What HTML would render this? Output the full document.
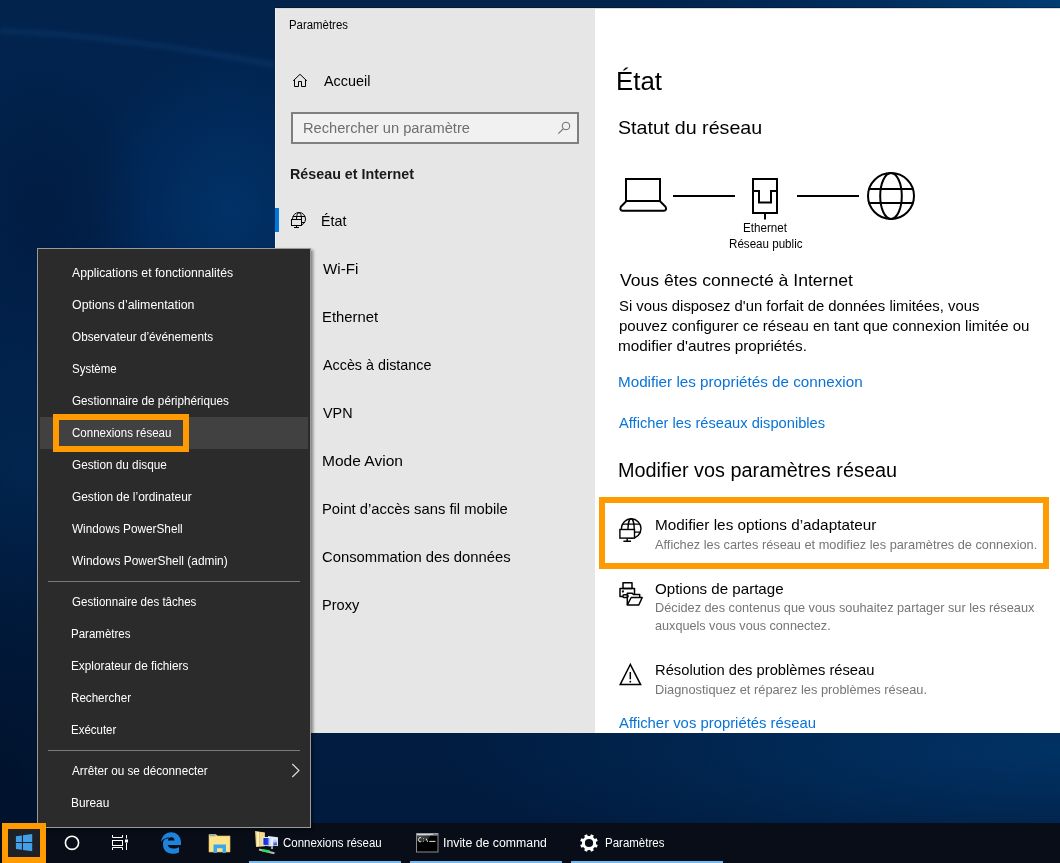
<!DOCTYPE html>
<html><head><meta charset="utf-8"><title>Paramètres</title>
<style>
html,body{margin:0;padding:0;}
body{width:1060px;height:863px;overflow:hidden;position:relative;font-family:"Liberation Sans",sans-serif;
background:#012250;}
.t{position:absolute;white-space:nowrap;}
.abs{position:absolute;}
svg{position:absolute;overflow:visible;}
</style></head><body>
<div class="abs" style="left:0;top:0;width:1060px;height:863px;
background:
 radial-gradient(ellipse 260px 330px at 0px 800px, rgba(0,12,32,0.6), rgba(0,12,32,0) 100%),
 radial-gradient(ellipse 110px 150px at 40px 210px, rgba(0,16,40,0.35), rgba(0,16,40,0) 100%),
 radial-gradient(ellipse 140px 170px at 230px 210px, rgba(1,52,108,0.85), rgba(1,52,108,0) 100%),
 radial-gradient(ellipse 620px 130px at 1060px 750px, rgba(1,56,110,0.8), rgba(1,56,110,0) 100%),
 radial-gradient(ellipse 90px 160px at 20px 470px, rgba(1,40,82,0.7), rgba(1,40,82,0) 100%),
 linear-gradient(180deg,#01234c 0%,#012350 25%,#011f46 55%,#011d42 80%,#011a3c 100%);"></div>
<svg style="left:0;top:0" width="1060" height="863"><defs><filter id="bl" x="-20%" y="-200%" width="140%" height="500%"><feGaussianBlur stdDeviation="2.2"/></filter></defs>
<path d="M0,31 C70,33 170,45 275,65" stroke="rgba(30,100,170,0.16)" stroke-width="6" fill="none" filter="url(#bl)"/></svg>
<div class="abs" style="left:275px;top:8px;width:320px;height:725px;background:#e6e6e6;"></div>
<div class="abs" style="left:595px;top:8px;width:465px;height:725px;background:#fff;"></div>
<div class="abs" style="left:275px;top:8px;width:785px;height:1px;background:#dcd9d6;"></div>
<div class="abs" style="left:275px;top:0;width:785px;height:8px;background:linear-gradient(90deg,rgba(1,35,76,0) 0%,rgba(1,35,76,0) 45%,#012c5c 75%,#013c72 100%);"></div>
<div class="abs" style="left:275px;top:7px;width:785px;height:1px;background:rgba(0,0,0,0.25);"></div>
<div class="abs" style="left:275px;top:8px;width:1px;height:725px;background:#f0f0f0;"></div>
<div class="t " style="left:288.55px;top:18.84px;font-size:12px;line-height:12px;color:#000;transform:scaleX(0.9508);transform-origin:0 0;">Paramètres</div>
<svg style="left:0;top:0" width="1" height="1"><path d="M293.2,80.8 L300,74.3 L306.8,80.8 M294.5,79.5 V86.5 H298.5 V81.5 H301.5 V86.5 H305.5 V79.5" stroke="#000" stroke-width="1" fill="none" stroke-linejoin="miter"/></svg>
<div class="t " style="left:324.30px;top:73.30px;font-size:15px;line-height:15px;color:#000;transform:scaleX(0.9583);transform-origin:0 0;">Accueil</div>
<div class="abs" style="left:291px;top:112px;width:284px;height:28px;border:2px solid #7f7f7f;background:#f1f1f1;"></div>
<div class="t " style="left:302.62px;top:120.10px;font-size:15px;line-height:15px;color:#6e6e6e;transform:scaleX(0.9765);transform-origin:0 0;">Rechercher un paramètre</div>
<svg style="left:0;top:0" width="1" height="1"><circle cx="566" cy="126" r="3.8" stroke="#6b6b6b" stroke-width="1" fill="none"/><path d="M563.2,128.8 L558.3,133.7" stroke="#6b6b6b" stroke-width="1.1"/></svg>
<div class="t " style="left:290.25px;top:166.30px;font-size:15px;line-height:15px;color:#1a1a1a;font-weight:700;transform:scaleX(0.9535);transform-origin:0 0;">Réseau et Internet</div>
<div class="abs" style="left:275px;top:208px;width:4px;height:24px;background:#0078d7;"></div>
<svg style="left:0;top:0" width="1" height="1"><g fill="none" stroke="#000" stroke-width="1">
<circle cx="299" cy="219" r="6.5"/>
<ellipse cx="299" cy="219" rx="2.5" ry="6.5"/>
<path d="M293,216.5 H305 M302,222.5 H305"/>
<rect x="291.5" y="219.5" width="10" height="6" fill="#e6e6e6"/>
<path d="M296.5,226 V227.5 M294,227.5 H299"/>
</g></svg>
<div class="t " style="left:321.45px;top:213.30px;font-size:15px;line-height:15px;color:#000;transform:scaleX(0.9500);transform-origin:0 0;">État</div>
<div class="t " style="left:322.90px;top:261.30px;font-size:15px;line-height:15px;color:#000;transform:scaleX(1.0088);transform-origin:0 0;">Wi-Fi</div>
<div class="t " style="left:321.81px;top:309.30px;font-size:15px;line-height:15px;color:#000;transform:scaleX(0.9875);transform-origin:0 0;">Ethernet</div>
<div class="t " style="left:322.90px;top:357.30px;font-size:15px;line-height:15px;color:#000;transform:scaleX(0.9558);transform-origin:0 0;">Accès à distance</div>
<div class="t " style="left:322.90px;top:405.30px;font-size:15px;line-height:15px;color:#000;transform:scaleX(0.9567);transform-origin:0 0;">VPN</div>
<div class="t " style="left:321.76px;top:453.30px;font-size:15px;line-height:15px;color:#000;transform:scaleX(1.0364);transform-origin:0 0;">Mode Avion</div>
<div class="t " style="left:321.81px;top:501.30px;font-size:15px;line-height:15px;color:#000;transform:scaleX(0.9861);transform-origin:0 0;">Point d’accès sans fil mobile</div>
<div class="t " style="left:322.30px;top:549.30px;font-size:15px;line-height:15px;color:#000;transform:scaleX(0.9880);transform-origin:0 0;">Consommation des données</div>
<div class="t " style="left:321.83px;top:597.30px;font-size:15px;line-height:15px;color:#000;transform:scaleX(0.9730);transform-origin:0 0;">Proxy</div>
<div class="t " style="left:616.21px;top:67.99px;font-size:26px;line-height:26px;color:#000;transform:scaleX(0.9932);transform-origin:0 0;">État</div>
<div class="t " style="left:617.57px;top:118.42px;font-size:19px;line-height:19px;color:#000;transform:scaleX(1.0343);transform-origin:0 0;">Statut du réseau</div>
<svg style="left:0;top:0" width="1" height="1"><g fill="none" stroke="#000" stroke-width="2">
<rect x="626" y="179" width="34" height="22"/>
<path d="M626,201.5 L620.8,206.8 Q619.5,210.7 622.5,210.7 H664 Q667,210.7 665.6,206.8 L660.3,201.5"/>
<path d="M673,196 H735"/>
<rect x="753" y="179" width="24" height="34"/>
<path d="M753,191 H759 V202.5 H771 V191 H777"/>
<path d="M765,214 V219.5"/>
<path d="M797,196 H859"/>
<circle cx="891" cy="196" r="23"/>
<ellipse cx="891" cy="196" rx="10.8" ry="23"/>
<path d="M868.5,189 H913.5 M868.5,203 H913.5"/>
</g></svg>
<div class="t " style="left:743.33px;top:222.34px;font-size:12px;line-height:12px;color:#000;transform:scaleX(0.9711);transform-origin:0 0;">Ethernet</div>
<div class="t " style="left:728.83px;top:237.84px;font-size:12px;line-height:12px;color:#000;transform:scaleX(0.9667);transform-origin:0 0;">Réseau public</div>
<div class="t " style="left:619.80px;top:272.41px;font-size:17px;line-height:17px;color:#000;transform:scaleX(1.0356);transform-origin:0 0;">Vous êtes connecté à Internet</div>
<div class="t " style="left:618.51px;top:298.30px;font-size:15px;line-height:15px;color:#000;transform:scaleX(0.9904);transform-origin:0 0;">Si vous disposez d'un forfait de données limitées, vous</div>
<div class="t " style="left:618.50px;top:318.30px;font-size:15px;line-height:15px;color:#000;transform:scaleX(1.0025);transform-origin:0 0;">pouvez configurer ce réseau en tant que connexion limitée ou</div>
<div class="t " style="left:618.48px;top:338.30px;font-size:15px;line-height:15px;color:#000;transform:scaleX(1.0191);transform-origin:0 0;">modifier d'autres propriétés.</div>
<div class="t " style="left:618.28px;top:374.30px;font-size:15px;line-height:15px;color:#0873d8;transform:scaleX(1.0151);transform-origin:0 0;">Modifier les propriétés de connexion</div>
<div class="t " style="left:619.30px;top:414.60px;font-size:15px;line-height:15px;color:#0873d8;transform:scaleX(0.9782);transform-origin:0 0;">Afficher les réseaux disponibles</div>
<div class="t " style="left:617.51px;top:460.47px;font-size:20px;line-height:20px;color:#000;transform:scaleX(0.9921);transform-origin:0 0;">Modifier vos paramètres réseau</div>
<div class="abs" style="left:599px;top:497px;width:438px;height:60px;border:6px solid #ff9a00;"></div>
<svg style="left:0;top:0" width="1" height="1"><g fill="none" stroke="#000" stroke-width="1.4">
<circle cx="631.2" cy="528.6" r="9.8"/>
<ellipse cx="631.1" cy="528.6" rx="3.1" ry="9.8"/>
<path d="M622.5,524.1 H640 M635,532.1 H640.3"/>
<rect x="619.9" y="529.5" width="14.6" height="8.6" fill="#fff"/>
<path d="M627.2,538.3 V541.3 M623.4,541.3 H631"/>
</g></svg>
<div class="t " style="left:654.68px;top:517.30px;font-size:15px;line-height:15px;color:#000;transform:scaleX(1.0208);transform-origin:0 0;">Modifier les options d’adaptateur</div>
<div class="t " style="left:655.00px;top:538.00px;font-size:13px;line-height:13px;color:#767676;transform:scaleX(0.9820);transform-origin:0 0;">Affichez les cartes réseau et modifiez les paramètres de connexion.</div>
<svg style="left:0;top:0" width="1" height="1"><g fill="none" stroke="#000" stroke-width="1.5" stroke-linejoin="round">
<rect x="623" y="582.8" width="9" height="5.8"/>
<path d="M623,596.5 H620 V588.6 H634.5 V594"/>
<circle cx="622.9" cy="591.5" r="0.4" fill="#000"/>
<rect x="623" y="594.8" width="5" height="2.7" rx="1" fill="#fff"/>
<path d="M627.3,605 V593.3 H632.3 L633.4,594.6 H639.7 V597.5"/>
<path d="M627.3,605 L631.2,597.5 H642.2 L638.8,605 Z" fill="#fff"/>
</g></svg>
<div class="t " style="left:655.40px;top:581.30px;font-size:15px;line-height:15px;color:#000;transform:scaleX(1.0079);transform-origin:0 0;">Options de partage</div>
<div class="t " style="left:655.02px;top:601.00px;font-size:13px;line-height:13px;color:#767676;transform:scaleX(0.9793);transform-origin:0 0;">Décidez des contenus que vous souhaitez partager sur les réseaux</div>
<div class="t " style="left:655.40px;top:619.00px;font-size:13px;line-height:13px;color:#767676;transform:scaleX(0.9722);transform-origin:0 0;">auxquels vous vous connectez.</div>
<svg style="left:0;top:0" width="1" height="1"><g fill="none" stroke="#000" stroke-width="1.5" stroke-linejoin="miter">
<path d="M630.3,664.5 L620.2,684.6 H640.6 Z"/>
<path d="M630.3,672 V679.3"/>
</g><circle cx="630.3" cy="681.7" r="0.9" fill="#000"/></svg>
<div class="t " style="left:655.22px;top:662.30px;font-size:15px;line-height:15px;color:#000;transform:scaleX(0.9820);transform-origin:0 0;">Résolution des problèmes réseau</div>
<div class="t " style="left:655.01px;top:683.00px;font-size:13px;line-height:13px;color:#767676;transform:scaleX(0.9854);transform-origin:0 0;">Diagnostiquez et réparez les problèmes réseau.</div>
<div class="t " style="left:619.30px;top:715.30px;font-size:15px;line-height:15px;color:#0873d8;transform:scaleX(0.9899);transform-origin:0 0;">Afficher vos propriétés réseau</div>
<div class="abs" style="left:0;top:823px;width:1060px;height:40px;background:#080d17;"></div>
<div class="abs" style="left:37px;top:248px;width:272px;height:578px;border:1px solid #9a9a9a;background:#2b2b2b;box-shadow:2px 2px 3px rgba(0,0,0,0.45);"></div>
<div class="abs" style="left:40px;top:417px;width:268px;height:32px;background:#414141;"></div>
<div class="abs" style="left:53px;top:414px;width:124px;height:26px;border:6px solid #ff9a00;"></div>
<div class="abs" style="left:48px;top:581px;width:252px;height:1px;background:#7a7a7a;"></div>
<div class="abs" style="left:48px;top:750px;width:252px;height:1px;background:#7a7a7a;"></div>
<div class="t " style="left:72.20px;top:266.84px;font-size:12px;line-height:12px;color:#fff;transform:scaleX(1.0190);transform-origin:0 0;">Applications et fonctionnalités</div>
<div class="t " style="left:72.20px;top:298.84px;font-size:12px;line-height:12px;color:#fff;transform:scaleX(1.0314);transform-origin:0 0;">Options d’alimentation</div>
<div class="t " style="left:72.20px;top:330.84px;font-size:12px;line-height:12px;color:#fff;transform:scaleX(0.9792);transform-origin:0 0;">Observateur d’événements</div>
<div class="t " style="left:72.04px;top:362.84px;font-size:12px;line-height:12px;color:#fff;transform:scaleX(0.9565);transform-origin:0 0;">Système</div>
<div class="t " style="left:72.20px;top:394.84px;font-size:12px;line-height:12px;color:#fff;transform:scaleX(0.9752);transform-origin:0 0;">Gestionnaire de périphériques</div>
<div class="t " style="left:72.20px;top:426.84px;font-size:12px;line-height:12px;color:#fff;transform:scaleX(0.9612);transform-origin:0 0;">Connexions réseau</div>
<div class="t " style="left:72.20px;top:458.84px;font-size:12px;line-height:12px;color:#fff;transform:scaleX(0.9794);transform-origin:0 0;">Gestion du disque</div>
<div class="t " style="left:72.20px;top:490.84px;font-size:12px;line-height:12px;color:#fff;transform:scaleX(0.9917);transform-origin:0 0;">Gestion de l’ordinateur</div>
<div class="t " style="left:72.20px;top:522.84px;font-size:12px;line-height:12px;color:#fff;transform:scaleX(0.9821);transform-origin:0 0;">Windows PowerShell</div>
<div class="t " style="left:72.20px;top:554.84px;font-size:12px;line-height:12px;color:#fff;transform:scaleX(0.9936);transform-origin:0 0;">Windows PowerShell (admin)</div>
<div class="t " style="left:72.20px;top:595.84px;font-size:12px;line-height:12px;color:#fff;transform:scaleX(0.9612);transform-origin:0 0;">Gestionnaire des tâches</div>
<div class="t " style="left:71.24px;top:627.84px;font-size:12px;line-height:12px;color:#fff;transform:scaleX(0.9590);transform-origin:0 0;">Paramètres</div>
<div class="t " style="left:71.22px;top:659.84px;font-size:12px;line-height:12px;color:#fff;transform:scaleX(0.9831);transform-origin:0 0;">Explorateur de fichiers</div>
<div class="t " style="left:71.23px;top:691.84px;font-size:12px;line-height:12px;color:#fff;transform:scaleX(0.9672);transform-origin:0 0;">Rechercher</div>
<div class="t " style="left:71.24px;top:723.84px;font-size:12px;line-height:12px;color:#fff;transform:scaleX(0.9565);transform-origin:0 0;">Exécuter</div>
<div class="t " style="left:72.20px;top:764.84px;font-size:12px;line-height:12px;color:#fff;transform:scaleX(0.9784);transform-origin:0 0;">Arrêter ou se déconnecter</div>
<div class="t " style="left:71.21px;top:796.84px;font-size:12px;line-height:12px;color:#fff;transform:scaleX(0.9892);transform-origin:0 0;">Bureau</div>
<svg style="left:0;top:0" width="1" height="1"><path d="M292.3,764 L299,770.5 L292.3,777" stroke="#e0e0e0" stroke-width="1.1" fill="none"/></svg>
<div class="abs" style="left:2px;top:823px;width:32px;height:28px;border:6px solid #ff9a00;border-bottom-width:6px;background:#1e2228;"></div>
<svg style="left:0;top:0" width="1" height="1"><g fill="#42a0e8">
<path d="M15.9,836.2 L21.9,835.4 V842 H15.9 Z"/>
<path d="M23,835.2 L32.2,834 V842 H23 Z"/>
<path d="M15.9,843.1 H21.9 V849.8 L15.9,849 Z"/>
<path d="M23,843.1 H32.2 V851.3 L23,850 Z"/>
</g></svg>
<svg style="left:0;top:0" width="1" height="1"><circle cx="72" cy="842.8" r="6.6" stroke="#fff" stroke-width="1.6" fill="none"/></svg>
<svg style="left:0;top:0" width="1" height="1"><g stroke="#fff" stroke-width="1" fill="none">
<path d="M112.5,835 V837.5 H122.5 V835 M112.5,850 V847.5 H122.5 V850"/>
<rect x="112.5" y="840.5" width="10" height="5"/>
<path d="M126.5,835 V838.5 M126.5,843 V850"/>
</g><rect x="125" y="839.5" width="3" height="3" fill="#fff"/></svg>
<svg style="left:156px;top:828px" width="30" height="30" viewBox="0 0 30 30">
<path fill="#1e83db" d="M25,17 L25,14.5 C25,8.5 21,4.2 15,4.2 C9.5,4.2 5.6,8.6 5,13.8 C6,12.6 7.3,11.5 8.4,10.8 C7.5,12.5 7,14.5 7,16.5 C7,21.8 10.8,25.8 16.5,25.8 C19,25.8 21.2,25.3 23,24.4 L23,19.2 C21.5,20 19.5,20.6 17.2,20.6 C14.5,20.6 12.2,19.4 11.8,17 Z"/>
<path fill="#080d17" d="M11.9,12.4 C12.2,10.4 13.6,9.2 15.3,9.2 C17.2,9.2 18.4,10.4 18.5,12.4 Z"/>
<path d="M6.2,13 C8,11.2 10.5,9.9 13,9.8" stroke="#080d17" stroke-width="0.9" fill="none"/>
</svg>
<svg style="left:0;top:0" width="1" height="1">
<path d="M209,834.5 H216 L217.5,836 H230 V852 H209 Z" fill="#fde38a" stroke="#e8c15a" stroke-width="0.6"/>
<rect x="209.5" y="835" width="6" height="1.3" fill="#6ab8f0"/>
<path d="M213.5,853 V844.5 H226 V853 H222.5 V848.2 H217 V853 Z" fill="#3aa6ee"/>
</svg>
<div class="abs" style="left:249px;top:861px;width:152px;height:2px;background:#76b9ed;"></div>
<div class="abs" style="left:410px;top:861px;width:152px;height:2px;background:#76b9ed;"></div>
<div class="abs" style="left:571px;top:861px;width:152px;height:2px;background:#76b9ed;"></div>
<svg style="left:250px;top:826px" width="40" height="32" viewBox="0 0 40 32">
<defs>
<linearGradient id="scr1" x1="0" y1="0" x2="1" y2="0"><stop offset="0" stop-color="#1428d0"/><stop offset="0.45" stop-color="#2040e0"/><stop offset="0.7" stop-color="#c8d4f8"/><stop offset="1" stop-color="#f0f4ff"/></linearGradient>
<linearGradient id="scr2" x1="0" y1="0" x2="0" y2="1"><stop offset="0" stop-color="#f0f4ff"/><stop offset="0.5" stop-color="#b8c8f4"/><stop offset="1" stop-color="#2038d8"/></linearGradient>
</defs>
<path d="M5,5 L14.9,6.4 V20.2 L6,21 Z" fill="#e6c86e"/>
<path d="M6.6,5.6 L9,6 V20.3 L6.8,20.6 Z" fill="#fbf0c8"/>
<path d="M10,6.3 L14.5,6.7 V19.8 L10,20.2 Z" fill="#f2da8e"/>
<path d="M18,10 L28,11.2 V20 L18,19.2 Z" fill="#dde6f6"/>
<path d="M19.2,11.6 L27,12.4 V19 L19.2,18.4 Z" fill="url(#scr2)"/>
<path d="M12.6,11 L23.2,11 V20.8 L12.6,19.6 Z" fill="#e4ebf8"/>
<path d="M13.4,12 L22.4,12 V19.8 L13.4,18.8 Z" fill="url(#scr1)"/>
<path d="M21,20.8 H23 V23 H21 Z" fill="#a8a8a8"/>
<path d="M9,23.4 C14,24.5 19,26 24.5,27.2" stroke="#b8b8b8" stroke-width="2" fill="none"/>
<path d="M12.5,24.2 C15,24.8 17.5,25.3 19.6,25.6" stroke="#22e055" stroke-width="2.6" fill="none"/>
</svg>
<div class="t " style="left:283.40px;top:836.84px;font-size:12px;line-height:12px;color:#fff;transform:scaleX(0.9544);transform-origin:0 0;">Connexions réseau</div>
<svg style="left:0;top:0" width="1" height="1">
<defs><radialGradient id="cmdg" cx="0.2" cy="0" r="0.9"><stop offset="0" stop-color="#505050"/><stop offset="0.5" stop-color="#2a2a2a"/><stop offset="0.51" stop-color="#000"/></radialGradient></defs>
<rect x="416.5" y="833.5" width="21.5" height="18.5" fill="url(#cmdg)" stroke="#8c8c8c" stroke-width="1"/>
<rect x="417" y="833.8" width="20.5" height="1.6" fill="#d0d4dc"/>
<rect x="433" y="834" width="4" height="1.2" fill="#7088b0"/>
<path d="M421.2,838 A1.6,2.2 0 1 0 421.2,841.4" stroke="#e8e8e8" stroke-width="1" fill="none"/>
<rect x="423" y="838.2" width="0.9" height="0.9" fill="#ccc"/><rect x="423" y="840.7" width="0.9" height="0.9" fill="#ccc"/>
<path d="M426,838.6 L427.7,841.8" stroke="#f0f0f0" stroke-width="1" fill="none"/>
<rect x="429.3" y="840.9" width="6.2" height="1" fill="#e0e0e0"/>
</svg>
<div class="t " style="left:443.48px;top:836.84px;font-size:12px;line-height:12px;color:#fff;transform:scaleX(1.0240);transform-origin:0 0;">Invite de command</div>
<svg style="left:0;top:0" width="1" height="1"><path fill-rule="evenodd" fill="#fff" d="M595.99,844.22 L597.78,844.99 L596.61,847.80 L594.81,847.08 L593.08,848.81 L593.80,850.61 L590.99,851.78 L590.22,849.99 L587.78,849.99 L587.01,851.78 L584.20,850.61 L584.92,848.81 L583.19,847.08 L581.39,847.80 L580.22,844.99 L582.01,844.22 L582.01,841.78 L580.22,841.01 L581.39,838.20 L583.19,838.92 L584.92,837.19 L584.20,835.39 L587.01,834.22 L587.78,836.01 L590.22,836.01 L590.99,834.22 L593.80,835.39 L593.08,837.19 L594.81,838.92 L596.61,838.20 L597.78,841.01 L595.99,841.78 Z M593.1,843 A4.1,4.1 0 1 0 584.9,843 A4.1,4.1 0 1 0 593.1,843 Z"/></svg>
<div class="t " style="left:604.54px;top:836.84px;font-size:12px;line-height:12px;color:#fff;transform:scaleX(0.9574);transform-origin:0 0;">Paramètres</div>
</body></html>
